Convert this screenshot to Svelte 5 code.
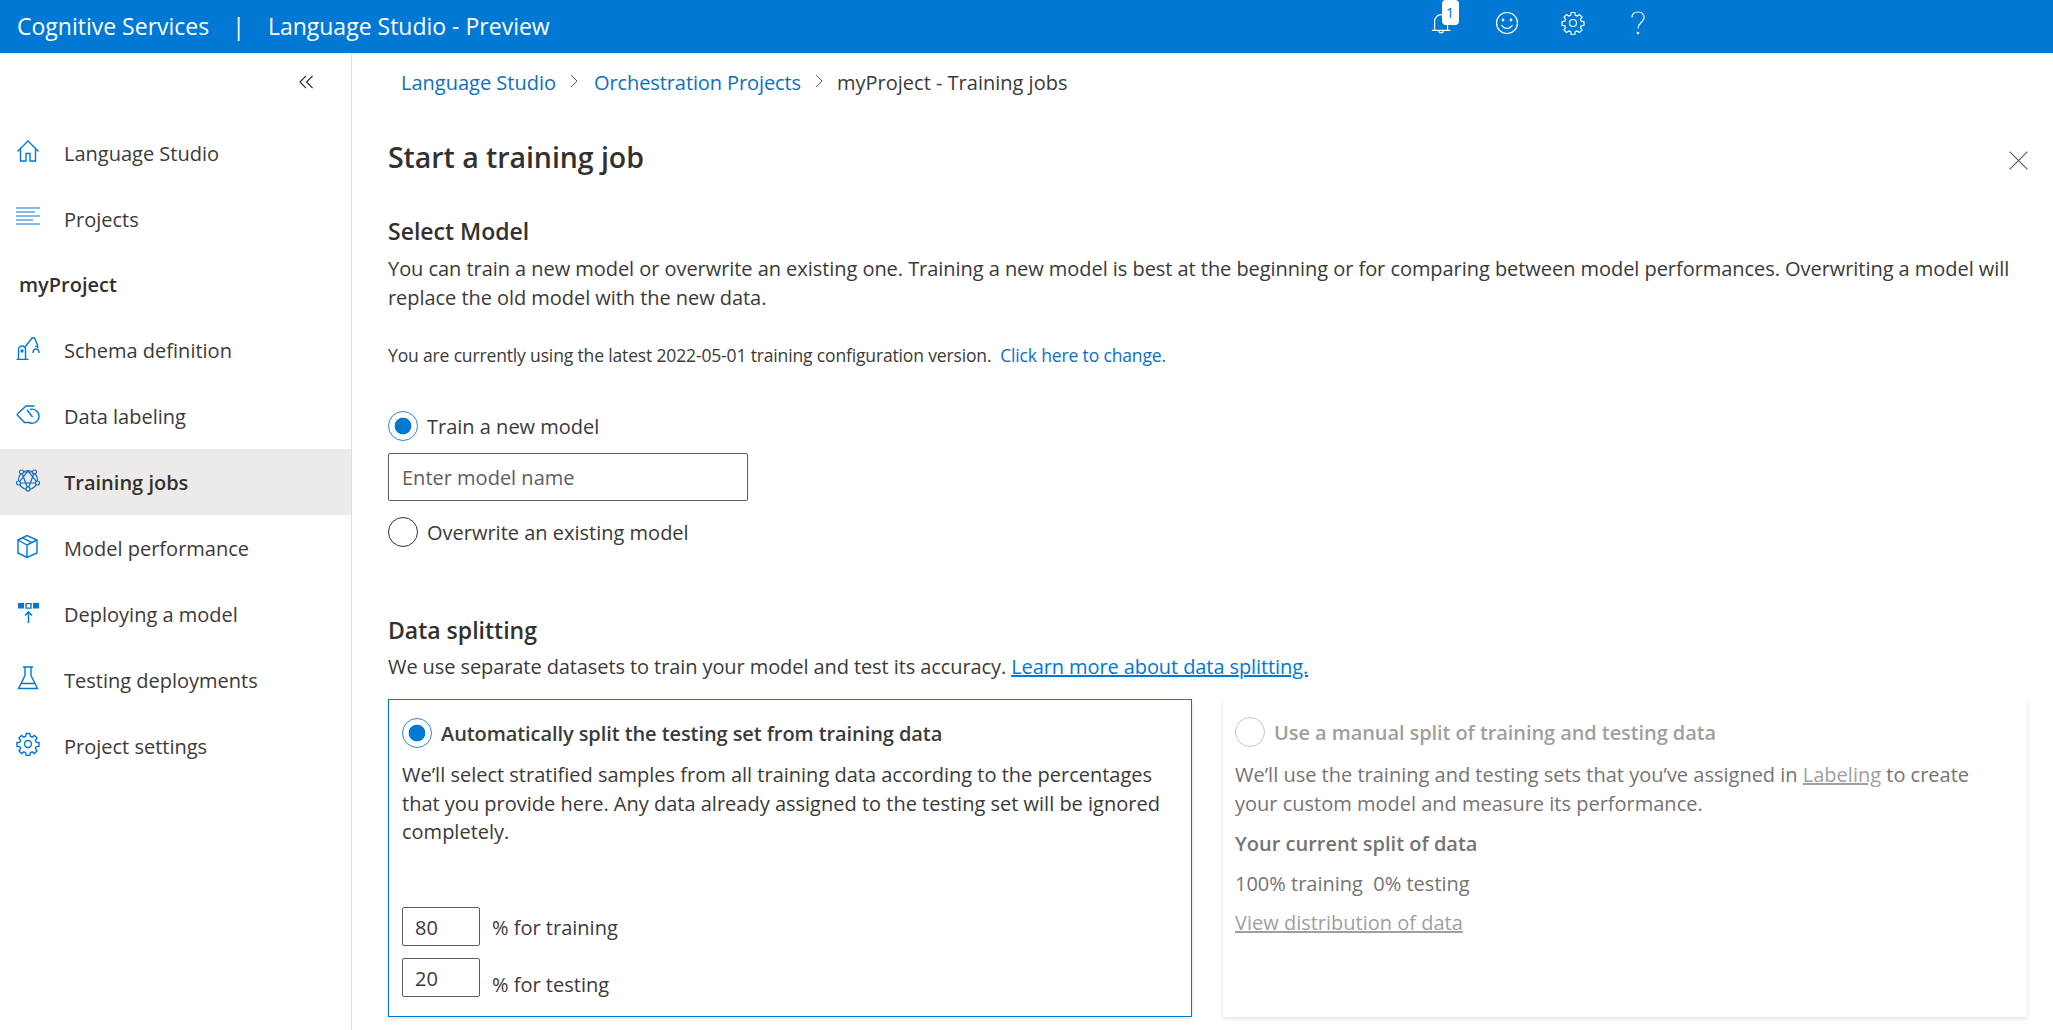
<script>
    let navTop = [
        { name: 'Language Studio', icon: 'home' },
        { name: 'Projects', icon: 'list' }
    ];
    let navProject = [
        { name: 'Schema definition', icon: 'schema' },
        { name: 'Data labeling', icon: 'tag' },
        { name: 'Training jobs', icon: 'net', active: true },
        { name: 'Model performance', icon: 'cube' },
        { name: 'Deploying a model', icon: 'deploy' },
        { name: 'Testing deployments', icon: 'flask' },
        { name: 'Project settings', icon: 'gear' }
    ];
    const gear = 'M10.2 1.5h3.6l.5 2.8 1.8.8 2.4-1.6 2.5 2.5-1.6 2.4.8 1.8 2.8.5v3.6l-2.8.5-.8 1.8 1.6 2.4-2.5 2.5-2.4-1.6-1.8.8-.5 2.8h-3.6l-.5-2.8-1.8-.8-2.4 1.6-2.5-2.5 1.6-2.4-.8-1.8-2.8-.5v-3.6l2.8-.5.8-1.8-1.6-2.4 2.5-2.5 2.4 1.6 1.8-.8z';
</script>

{#snippet icon(kind)}
    <svg class="nav-icon" viewBox="0 0 24 24" fill="none" stroke="#0078d4" stroke-width="1.4">
        {#if kind === 'home'}
            <path d="M1.5 12.5 12 2l10.500 10.500M4.500 10v12h5.500v-7.500h4V22h5.500V10" />
        {:else if kind === 'list'}
            <path d="M0 3h24M0 7h19M0 11h24M0 15h17M0 19h24" stroke-width="1.100" />
        {:else if kind === 'schema'}
            <path d="M0.500 23.500h12M2.500 23.500V13.500a3.500 3.500 0 0 1 7 0v10M9 11l7-9 2.500 0 3.500 8" />
            <circle cx="6" cy="15" r="1" />
            <path d="M19 10.500a2 2 0 0 1 3 1.500M17 17c0-3 1.500-4 3-4s3 1 3 4" />
        {:else if kind === 'tag'}
            <path d="M.800 12.500 10 4h8.500M.800 12.500l7.700 8h5.500" />
            <path d="M14 7.500a7 7 0 1 1-1 13M11 8l5.500 7" />
        {:else if kind === 'net'}
            <g stroke="#0f6cbd" stroke-width="1.200">
                <circle cx="12" cy="12" r="9.500" />
                <path d="M5.500 4 18.500 4 12 21zM2.500 15 12 3l9.500 12z" />
                <circle cx="5.500" cy="4" r="2" fill="#edebe9" />
                <circle cx="18.500" cy="4" r="2" fill="#edebe9" />
                <circle cx="2.500" cy="15" r="2" fill="#edebe9" />
                <circle cx="21.500" cy="15" r="2" fill="#edebe9" />
                <circle cx="12" cy="21" r="2" fill="#edebe9" />
            </g>
        {:else if kind === 'cube'}
            <path d="M2 6 11 1.500 21 6v13l-10 4.500L2 19zM2 6l9 5 10-5M11 11v12.500M6.500 3.800l10 5" />
        {:else if kind === 'deploy'}
            <path d="M2 3h6v5.500H2zM17 3h6v5.500h-6z" fill="#0078d4" stroke="none" />
            <path d="M10 3.600h5v4.500h-5z" />
            <path d="M12.500 23V12M9 15.500l3.500-3.500 3.500 3.500" stroke-width="1.500" />
        {:else if kind === 'flask'}
            <path d="M7 1h10M9 1v8.500L2.500 22.500h19L15 9.500V1M5 17.500h14" />
        {:else}
            <path d={gear} />
            <circle cx="12" cy="12" r="3.500" />
        {/if}
    </svg>
{/snippet}

{#snippet navItem(item)}
    <div class="nav-item" class:active={item.active}>
        {@render icon(item.icon)}
        <span>{item.name}</span>
    </div>
{/snippet}

<header class="topbar">
    <div class="brand">
        <span>Cognitive Services</span>
        <span class="divider">|</span>
        <span>Language Studio - Preview</span>
    </div>
    <div class="top-icons">
        <div class="bell">
            <svg viewBox="0 0 24 26" fill="none" stroke="#fff" stroke-width="1.300"><path d="M1 21h20M4 21V11a7 7 0 0 1 14 0v10M8.500 21a2.500 2.500 0 0 0 5 0" /></svg>
            <span class="badge">1</span>
        </div>
        <svg viewBox="0 0 24 24" fill="none" stroke="#fff" stroke-width="1.200"><circle cx="12" cy="12" r="10.500" /><circle cx="8" cy="9" r=".8" fill="#fff" /><circle cx="16" cy="9" r=".8" fill="#fff" /><path d="M6.500 14c2.500 4.500 8.500 4.500 11 0" /></svg>
        <svg viewBox="0 0 24 24" fill="none" stroke="#fff" stroke-width="1.200"><path d={gear} /><circle cx="12" cy="12" r="3.500" /></svg>
        <svg viewBox="0 0 24 24" fill="none" stroke="#fff" stroke-width="1.200"><path d="M6 6.500C6 3 8.500 1 12 1s6 2.200 6 5.500c0 5-6 5-6 11" /><circle cx="12" cy="22" r=".7" fill="#fff" /></svg>
    </div>
</header>

<div class="shell">
    <aside class="sidebar">
        <div class="collapse">
            <svg viewBox="0 0 16 14" fill="none" stroke="#201f1e" stroke-width="1.200"><path d="M7.500 0.500 1 7l6.500 6.500M14.500 0.500 8 7l6.500 6.500" /></svg>
        </div>
        {#each navTop as item}
            {@render navItem(item)}
        {/each}
        <div class="project-name">myProject</div>
        {#each navProject as item}
            {@render navItem(item)}
        {/each}
    </aside>

    <main class="content">
        <nav class="crumbs">
            <a href="#top">Language Studio</a>
            <svg viewBox="0 0 10 14" fill="none" stroke="#605e5c"><path d="M2 1l6 6-6 6" /></svg>
            <a class="orch" href="#top">Orchestration Projects</a>
            <svg viewBox="0 0 10 14" fill="none" stroke="#605e5c"><path d="M2 1l6 6-6 6" /></svg>
            <span>myProject - Training jobs</span>
        </nav>

        <div class="panel">
            <div class="title-row">
                <h1>Start a training job</h1>
                <svg class="close" viewBox="0 0 16 16" fill="none" stroke="#605e5c" stroke-width="1"><path d="M.5.500l15 15M15.500.500l-15 15" /></svg>
            </div>

            <h2>Select Model</h2>
            <p class="lead">You can train a new model or overwrite an existing one. Training a new model is best at the beginning or for comparing between model performances. Overwriting a model will replace the old model with the new data.</p>
            <p class="config">You are currently using the latest 2022-05-01 training configuration version. &nbsp;<a href="#top">Click here to change.</a></p>

            <div class="radio-row first">
                <span class="radio on"></span>
                <span>Train a new model</span>
            </div>
            <div class="name-input">Enter model name</div>
            <div class="radio-row">
                <span class="radio"></span>
                <span>Overwrite an existing model</span>
            </div>

            <h2 class="split-title">Data splitting</h2>
            <p class="split-lead">We use separate datasets to train your model and test its accuracy. <a class="learn" href="#top">Learn more about data splitting.</a></p>

            <div class="cards">
                <section class="card selected">
                    <div class="card-head">
                        <span class="radio on"></span>
                        <strong>Automatically split the testing set from training data</strong>
                    </div>
                    <p>We’ll select stratified samples from all training data according to the percentages that you provide here. Any data already assigned to the testing set will be ignored completely.</p>
                    <div class="pct-rows">
                        <div class="pct"><span class="pct-box">80</span><span class="pct-label">% for training</span></div>
                        <div class="pct"><span class="pct-box">20</span><span class="pct-label low">% for testing</span></div>
                    </div>
                </section>
                <section class="card disabled">
                    <div class="card-head">
                        <span class="radio off"></span>
                        <strong>Use a manual split of training and testing data</strong>
                    </div>
                    <p>We’ll use the training and testing sets that you’ve assigned in <u>Labeling</u> to create your custom model and measure its performance.</p>
                    <div class="split-name">Your current split of data</div>
                    <div class="split-value">100% training &nbsp;0% testing</div>
                    <u class="split-link">View distribution of data</u>
                </section>
            </div>
        </div>
    </main>
</div>

<style>
    :global(body) {
        background: #fff;
        font-family: "Open Sans", "Noto Sans", sans-serif;
        color: #3b3a39;
        overflow: hidden;
    }
    .topbar {
        height: 53px;
        background: #0078d4;
        color: #fff;
        display: flex;
        align-items: center;
        justify-content: space-between;
        padding: 0 0 0 17px;
        overflow: hidden;
    }
    .brand {
        display: flex;
        gap: 23px;
        font-size: 23px;
        margin-top: -2px;
    }
    .top-icons {
        display: flex;
        align-items: center;
        gap: 41.500px;
        margin-right: 403px;
        margin-top: -7px;
    }
    .top-icons svg {
        width: 24px;
        height: 24px;
    }
    .bell {
        position: relative;
        width: 24px;
        height: 24px;
    }
    .badge {
        position: absolute;
        left: 12px;
        top: -11px;
        width: 17px;
        height: 25px;
        border-radius: 4px;
        background: #fff;
        color: #0078d4;
        font-size: 15px;
        line-height: 25px;
        text-align: center;
    }
    .shell {
        display: flex;
        height: 977px;
    }
    .sidebar {
        width: 351px;
        flex: none;
        border-right: 1px solid #e1dfdd;
    }
    .collapse {
        height: 67px;
        display: flex;
        justify-content: flex-end;
        align-items: flex-start;
        padding: 22px 37px 0 0;
        box-sizing: border-box;
    }
    .collapse svg {
        width: 15px;
        height: 14px;
    }
    .nav-item {
        height: 66px;
        display: flex;
        align-items: center;
        padding-left: 16px;
        gap: 24px;
        font-size: 20px;
    }
    .nav-item.active {
        background: #edebe9;
        font-weight: 600;
        color: #323130;
    }
    .nav-icon {
        width: 24px;
        height: 24px;
        flex: none;
        margin-top: -4px;
    }
    .project-name {
        height: 65px;
        line-height: 65px;
        padding-left: 19px;
        font-size: 20px;
        font-weight: 600;
        color: #323130;
    }
    .content {
        flex: 1;
        min-width: 0;
        padding-left: 36px;
    }
    .crumbs {
        height: 58px;
        display: flex;
        align-items: center;
        font-size: 20px;
        padding-left: 13px;
        gap: 13px;
    }
    .crumbs a {
        color: #106ebe;
        text-decoration: none;
    }
    .crumbs .orch {
        margin-left: 2px;
        letter-spacing: -0.1px;
    }
    .crumbs svg {
        width: 10px;
        height: 14px;
        margin-top: -3px;
    }
    .panel {
        padding-right: 26px;
    }
    .title-row {
        display: flex;
        justify-content: space-between;
        align-items: center;
        height: 92px;
    }
    h1 {
        margin: 0;
        font-size: 28.500px;
        font-weight: 600;
        letter-spacing: -0.05px;
        color: #323130;
    }
    .close {
        width: 19px;
        height: 19px;
        margin-right: -1px;
        margin-top: 6px;
    }
    h2 {
        margin: 13px 0 0;
        font-size: 23px;
        line-height: 30px;
        font-weight: 600;
        color: #323130;
    }
    .lead {
        margin: 7.500px 0 0;
        font-size: 20px;
        line-height: 29px;
        letter-spacing: -0.05px;
    }
    .config {
        margin: 30.500px 0 0;
        font-size: 17.500px;
        line-height: 26px;
        letter-spacing: -0.15px;
    }
    .config a {
        color: #106ebe;
        text-decoration: none;
    }
    .radio-row {
        display: flex;
        align-items: center;
        gap: 9px;
        font-size: 20px;
        height: 30px;
        margin-top: 16px;
    }
    .radio-row.first {
        margin-top: 43px;
    }
    .radio {
        width: 30px;
        height: 30px;
        border-radius: 50%;
        border: 1.500px solid #323130;
        box-sizing: border-box;
        flex: none;
        background: #fff;
    }
    .radio.on {
        border-color: #2b88d8;
        background: radial-gradient(circle, #0078d4 0 8px, #fff 8.700px);
    }
    .radio.off {
        border-color: #c8c6c4;
    }
    .name-input {
        width: 360px;
        height: 48px;
        margin-top: 12px;
        box-sizing: border-box;
        border: 1px solid #605e5c;
        border-radius: 2px;
        padding-left: 13px;
        line-height: 48px;
        font-size: 20px;
        color: #605e5c;
    }
    .split-title {
        margin-top: 68px;
    }
    .split-lead {
        margin: 6.500px 0 0;
        font-size: 20px;
        line-height: 29px;
        letter-spacing: -0.09px;
    }
    .learn {
        color: #0078d4;
    }
    .cards {
        display: grid;
        grid-template-columns: 804px 804px;
        gap: 31px;
        margin-top: 18.500px;
    }
    .card {
        height: 318px;
        box-sizing: border-box;
        padding: 18px 13px 0;
        box-shadow: 0 1.600px 3.600px rgba(0, 0, 0, 0.13), 0 0.300px 0.900px rgba(0, 0, 0, 0.11);
    }
    .card.selected {
        border: 1px solid #0078d4;
    }
    .card.disabled {
        color: #767472;
        padding-left: 12px;
    }
    .card.disabled u {
        color: #a19f9d;
    }
    .card-head {
        display: flex;
        align-items: center;
        gap: 9px;
        height: 30px;
        font-size: 20px;
        letter-spacing: -0.08px;
    }
    .card-head strong {
        font-weight: 600;
    }
    .disabled .card-head strong {
        color: #a19f9d;
    }
    .card p {
        margin: 13px 0 0;
        font-size: 20px;
        line-height: 28.500px;
    }
    .disabled p {
        padding-top: 1px;
    }
    .pct-rows {
        margin-top: 60px;
        display: flex;
        flex-direction: column;
        gap: 12px;
    }
    .pct {
        display: flex;
        gap: 12px;
        height: 39px;
        font-size: 20px;
    }
    .pct-box {
        width: 78px;
        height: 39px;
        box-sizing: border-box;
        border: 1px solid #605e5c;
        border-radius: 2px;
        padding-left: 12px;
        line-height: 40px;
        font-size: 20px;
    }
    .pct-label {
        line-height: 42px;
    }
    .pct-label.low {
        line-height: 54px;
    }
    .split-name {
        margin-top: 12px;
        font-size: 20px;
        font-weight: 600;
        line-height: 28px;
    }
    .split-value {
        margin-top: 12px;
        font-size: 20px;
        line-height: 28px;
    }
    .split-link {
        display: block;
        margin-top: 11px;
        font-size: 20px;
        line-height: 28px;
    }
</style>
